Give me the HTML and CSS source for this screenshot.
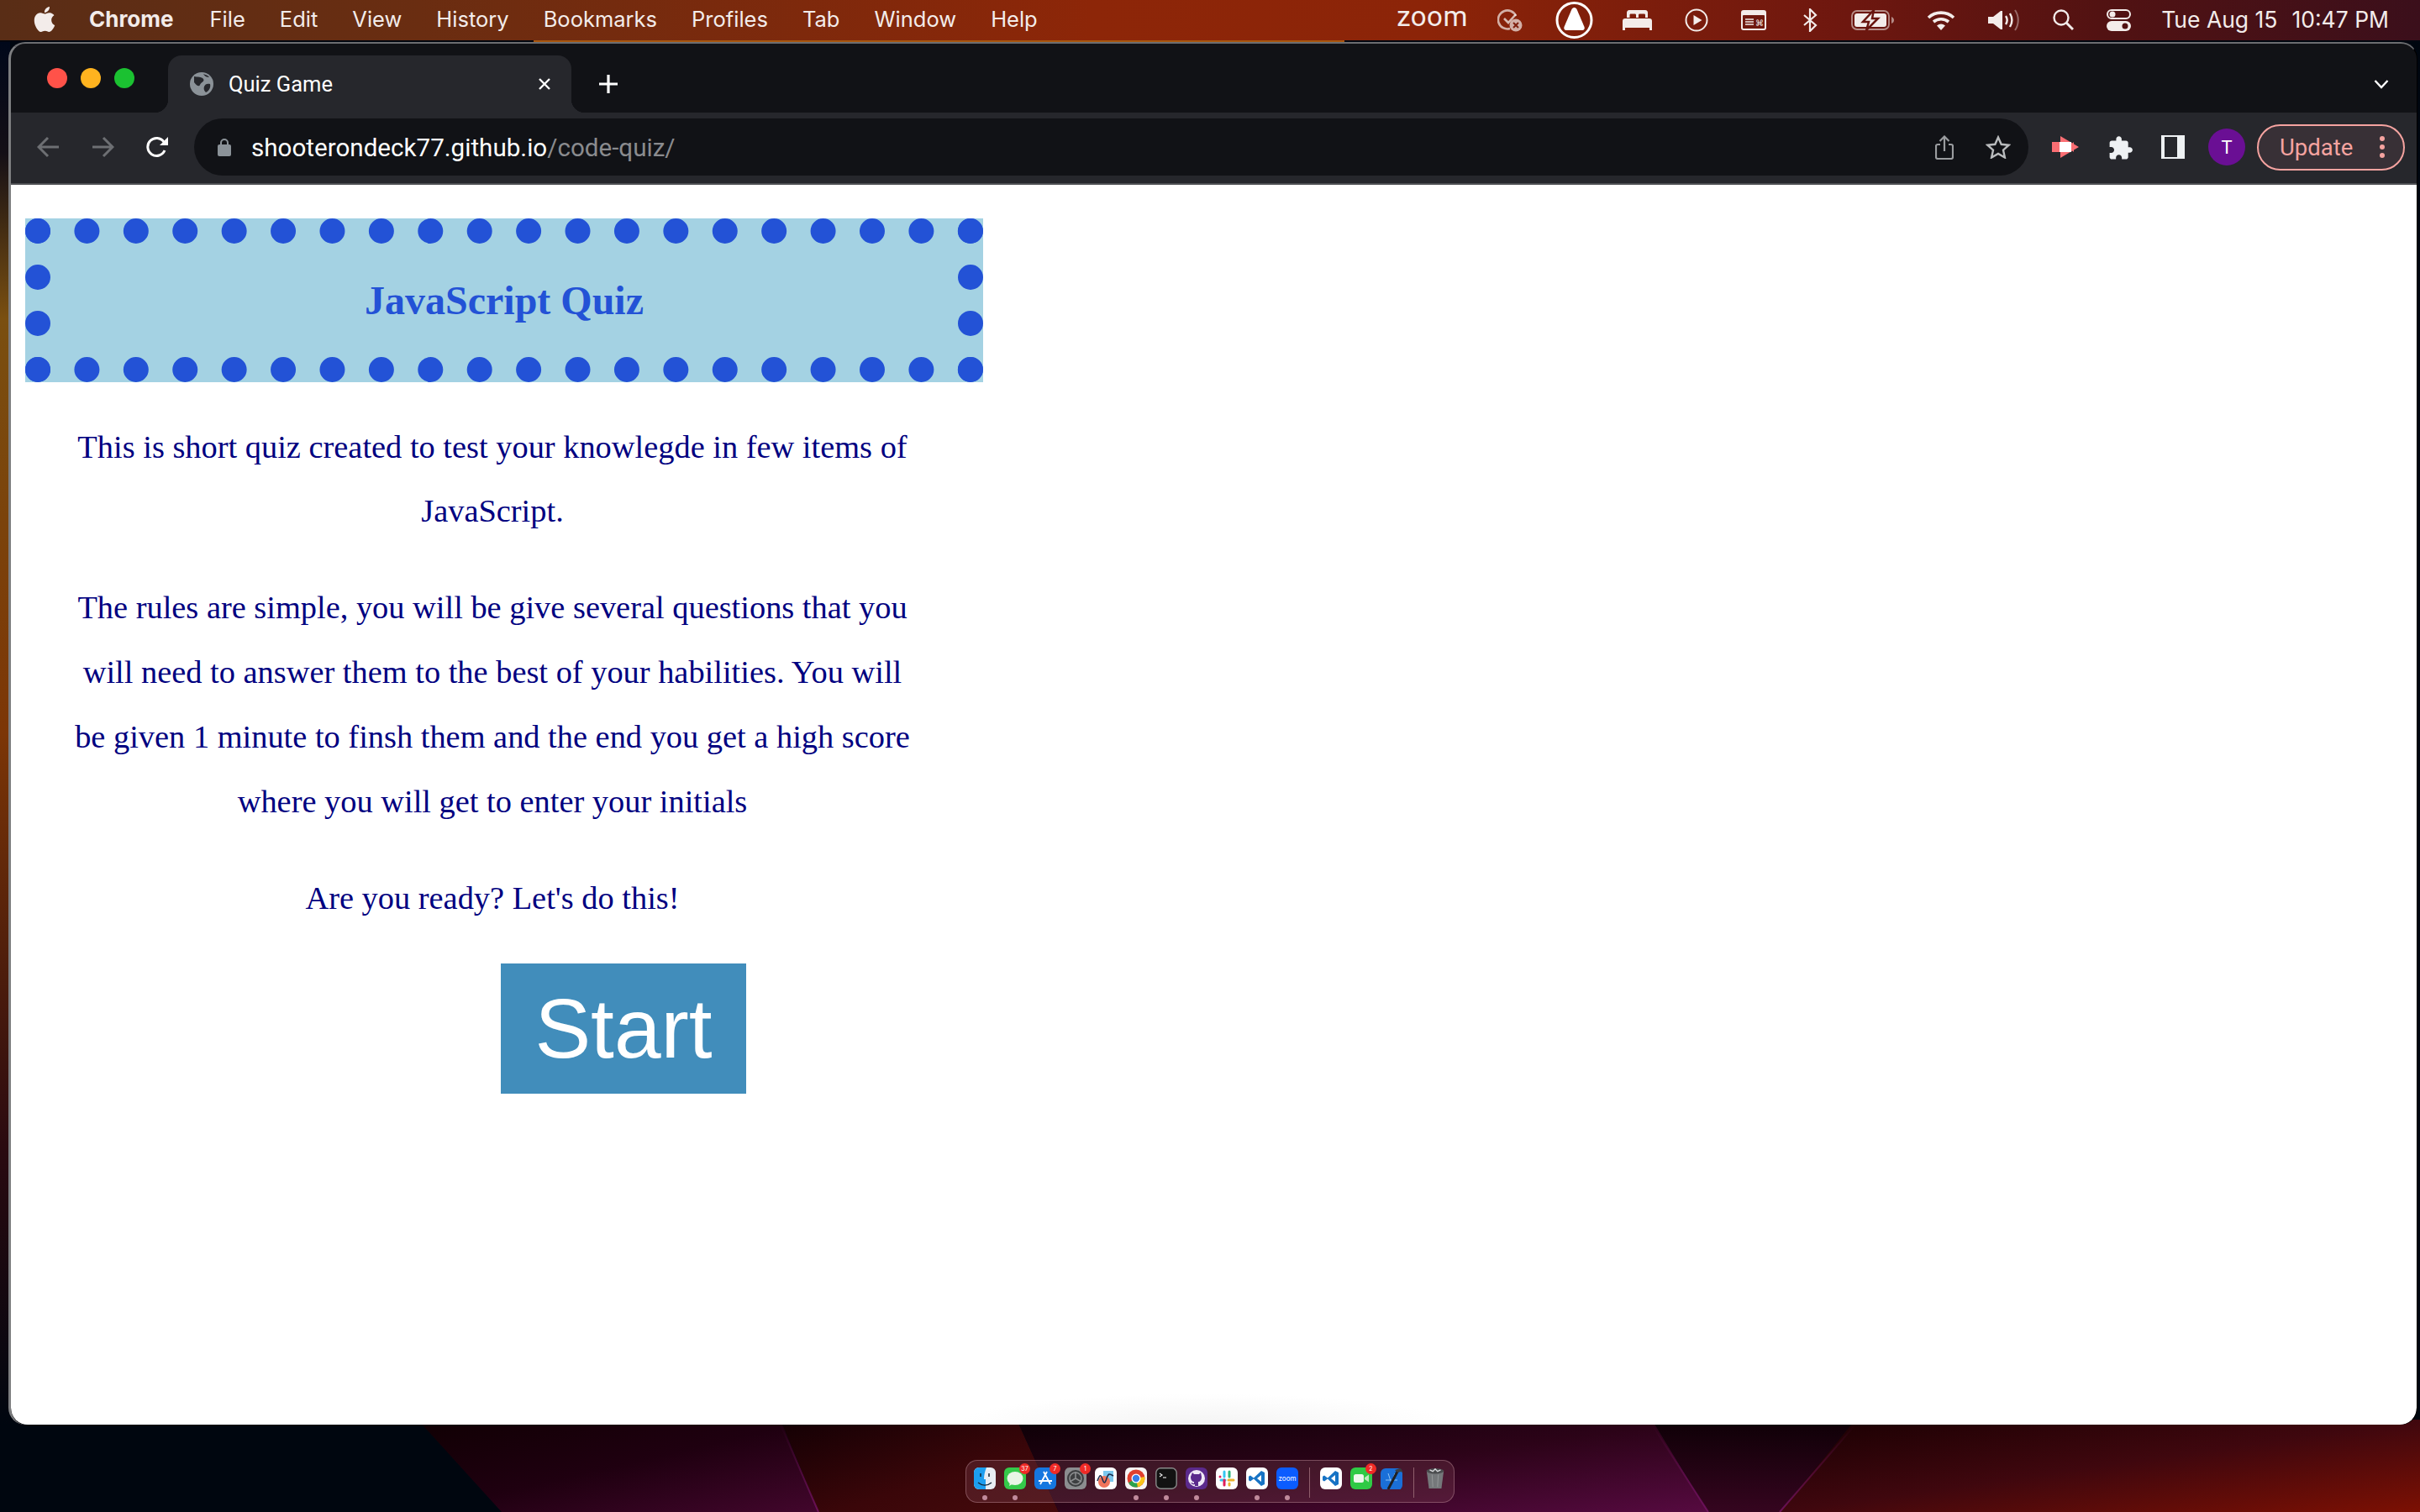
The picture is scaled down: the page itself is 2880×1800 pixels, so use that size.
FILE: index.html
```html
<!DOCTYPE html>
<html lang="en">
<head>
<meta charset="utf-8">
<title>Quiz Game</title>
<link rel="stylesheet" href="styles.css">
</head>
<body>
<div class="desktop">
  <svg class="wallpaper" viewBox="0 0 2880 1800" aria-hidden="true">
    <defs>
      <linearGradient id="ws" x1="0" y1="0" x2="0" y2="1"><stop offset="0" stop-color="#00081a"/><stop offset=".08" stop-color="#140f16"/><stop offset=".2" stop-color="#7a4f10"/><stop offset=".5" stop-color="#7c3606"/><stop offset=".8" stop-color="#2a0a10"/><stop offset="1" stop-color="#00060f"/></linearGradient>
      <linearGradient id="wa" x1="0" y1="0" x2="1" y2="1"><stop offset="0" stop-color="#100003"/><stop offset=".5" stop-color="#1f0010"/><stop offset="1" stop-color="#42062c"/></linearGradient>
      <linearGradient id="wb" x1="0" y1="0" x2="1" y2="1"><stop offset="0" stop-color="#130004"/><stop offset=".6" stop-color="#3a0609"/><stop offset="1" stop-color="#450a0c"/></linearGradient>
      <linearGradient id="wc" x1="0" y1="0" x2="1" y2="1"><stop offset="0" stop-color="#0d0006"/><stop offset=".5" stop-color="#2c0318"/><stop offset="1" stop-color="#560a40"/></linearGradient>
      <linearGradient id="wd" x1="0" y1="0" x2="0" y2="1"><stop offset="0" stop-color="#0e0006"/><stop offset="1" stop-color="#35051f"/></linearGradient>
      <linearGradient id="we" x1="0" y1="0" x2="1" y2="1"><stop offset="0" stop-color="#190002"/><stop offset=".5" stop-color="#3f070e"/><stop offset="1" stop-color="#7c1003"/></linearGradient>
      <linearGradient id="wl" gradientUnits="userSpaceOnUse" x1="0" y1="1696" x2="0" y2="1800"><stop offset="0" stop-color="#6a1058" stop-opacity="0"/><stop offset="1" stop-color="#7a1468" stop-opacity=".8"/></linearGradient>
    </defs>
    <rect width="2880" height="1800" fill="#00060f"/>
    <rect x="0" y="50" width="12" height="1646" fill="url(#ws)"/>
    <rect x="635" y="48" width="965" height="2" fill="#a8560e"/>
    <path d="M497 1690L597 1800H974L929 1690Z" fill="url(#wa)"/>
    <path d="M929 1690L974 1800H1260L1210 1690Z" fill="url(#wb)"/>
    <path d="M1210 1690L1260 1800H2033L1966 1690Z" fill="url(#wc)"/>
    <path d="M1966 1690L2033 1800H2118L2208 1690Z" fill="url(#wd)"/>
    <path d="M2208 1690L2118 1800H2880V1690Z" fill="url(#we)"/>
    <path d="M929 1696L974 1800M1966 1696L2033 1800M2208 1696L2118 1800" stroke="url(#wl)" stroke-width="2" fill="none"/>
  </svg>

  <header class="menubar">
    <nav class="menu-left">
      <svg class="apple" viewBox="0 0 24 24"><path fill="currentColor" d="M12.152 6.896c-.948 0-2.415-1.078-3.96-1.04-2.04.027-3.91 1.183-4.961 3.014-2.117 3.675-.546 9.103 1.519 12.09 1.013 1.454 2.208 3.09 3.792 3.039 1.52-.065 2.09-.987 3.935-.987 1.831 0 2.35.987 3.96.948 1.637-.026 2.676-1.48 3.676-2.948 1.156-1.688 1.636-3.325 1.662-3.415-.039-.013-3.182-1.221-3.22-4.857-.026-3.04 2.48-4.494 2.597-4.559-1.429-2.09-3.623-2.324-4.39-2.376-2-.156-3.675 1.09-4.61 1.09zM15.53 3.83c.843-1.012 1.4-2.427 1.245-3.83-1.207.052-2.662.805-3.532 1.818-.78.896-1.454 2.338-1.273 3.714 1.338.104 2.715-.688 3.559-1.701"/></svg>
      <span class="app-name">Chrome</span>
      <span>File</span><span>Edit</span><span>View</span><span>History</span><span>Bookmarks</span><span>Profiles</span><span>Tab</span><span>Window</span><span>Help</span>
    </nav>
    <div class="menu-right">
      <span class="zoom-mark">zoom</span>
      <svg class="st w30" viewBox="0 0 30 28"><path d="M22 9A11 11 0 1 0 15 24" fill="none" stroke="currentColor" stroke-width="2.6" opacity=".7"/><path d="M8 12l5 5 9-10" fill="none" stroke="currentColor" stroke-width="2.6" opacity=".75"/><circle cx="22" cy="20" r="7.5" fill="currentColor" opacity=".7"/><path d="M19 17l6 6M25 17l-6 6" stroke="#7e1f0d" stroke-width="2"/></svg>
      <svg class="st w45" viewBox="0 0 45 44"><circle cx="22.5" cy="22" r="20.5" fill="none" stroke="#fff" stroke-width="3"/><path d="M22.5 7c1.500 0 2.500 1 3 2l9 21c.8 2-.3 4-2.500 4H13c-2.200 0-3.300-2-2.500-4l9-21c.5-1 1.500-2 3-2z" fill="#fff"/></svg>
      <svg class="st w35" viewBox="0 0 35 24"><path fill="currentColor" d="M5 9V3c0-1.500 1-3 3-3h19c2 0 3 1.500 3 3v6h-3V6c0-1-.5-1.500-1.500-1.500h-5c-1 0-1.500.5-1.500 1.500v3h-3V6c0-1-.5-1.500-1.500-1.500h-5C9 4.500 8.500 5 8.500 6v3zM3 10h29c2 0 3 1 3 3v11h-3v-3H3v3H0V13c0-2 1-3 3-3z"/></svg>
      <svg class="st w28" viewBox="0 0 28 28"><circle cx="14" cy="14" r="12.500" fill="none" stroke="currentColor" stroke-width="2"/><path d="M10.500 8l10 6-10 6z" fill="currentColor"/></svg>
      <svg class="st w30" viewBox="0 0 30 24"><rect width="30" height="24" rx="3" fill="currentColor"/><rect x="2" y="6" width="26" height="16" rx="1" fill="#6f190f"/><path d="M5 11h10M5 14h10M5 17h10" stroke="currentColor" stroke-width="1.500"/><text x="17" y="19" class="cmd">⌘</text></svg>
      <svg class="st w20 bt" viewBox="0 0 20 28"><path d="M3 8l14 12-7 7V1l7 7L3 20" fill="none" stroke="currentColor" stroke-width="2.200"/></svg>
      <svg class="st w51" viewBox="0 0 51 24"><rect x="1" y="1" width="44" height="22" rx="6" fill="none" stroke="currentColor" opacity=".55" stroke-width="1.800"/><path d="M48 8c2 1 3 2 3 4s-1 3-3 4z" fill="currentColor" opacity=".55"/><rect x="4" y="4" width="38" height="16" rx="3" fill="currentColor"/><path d="M27 0L14 14h7l-3 10 14-14h-7z" fill="currentColor" stroke="#68150f" stroke-width="2.500"/></svg>
      <svg class="st w34" viewBox="0 0 34 24"><path d="M2 9a22 22 0 0 1 30 0M8 14a14 14 0 0 1 18 0" fill="none" stroke="currentColor" stroke-width="3.600"/><path d="M12 18.500a8 8 0 0 1 10 0L17 24z" fill="currentColor"/></svg>
      <svg class="st w38" viewBox="0 0 38 28"><path fill="currentColor" d="M0 10h6L15 3h2v22h-2L6 18H0z"/><path d="M21 9c2 3 2 7 0 10M26 6c3 5 3 11 0 16" fill="none" stroke="currentColor" stroke-width="2.400"/><path d="M32 2c5 7 5 17 0 24" fill="none" stroke="currentColor" stroke-width="2" opacity=".4"/></svg>
      <svg class="st w25" viewBox="0 0 25 25"><circle cx="10" cy="10" r="8.500" fill="none" stroke="currentColor" stroke-width="2.400"/><path d="M16 16l8 8" stroke="currentColor" stroke-width="3"/></svg>
      <svg class="st w29" viewBox="0 0 29 26"><rect x="1" y="1" width="27" height="10" rx="5" fill="none" stroke="currentColor" stroke-width="2"/><circle cx="7" cy="6" r="3.500" fill="currentColor"/><rect y="14" width="29" height="12" rx="6" fill="currentColor"/><circle cx="22" cy="20" r="3.500" fill="#521212"/></svg>
      <div class="clock"><span>Tue Aug 15</span><span>10:47 PM</span></div>
    </div>
  </header>

  <div class="window">
    <div class="tabstrip">
      <div class="lights"><i class="light red"></i><i class="light yellow"></i><i class="light green"></i></div>
      <div class="tab">
        <svg class="favicon" viewBox="0 0 28 28"><circle cx="14" cy="14" r="14" fill="#8b9298"/><path d="M5 5c4 1 9 0 11 3s-3 4-4 7-5 0-7-3zM24 14c-3-1-6 0-7 3s0 5 2 7c4-2 6-6 5-10zM16 2c2 1 5 1 7 4-3 0-5-1-7-4z" fill="#26272c"/></svg>
        <span class="tab-title">Quiz Game</span>
        <svg class="tab-x" viewBox="0 0 16 16"><path d="M2 2l12 12M14 2L2 14" stroke="#fff" stroke-width="2.400"/></svg>
      </div>
      <svg class="newtab" viewBox="0 0 24 24"><path d="M12 1v22M1 12h22" stroke="#fff" stroke-width="3.200"/></svg>
      <svg class="chev" viewBox="0 0 18 12"><path d="M1.500 2L9 10l7.500-8" fill="none" stroke="#fff" stroke-width="2.400"/></svg>
    </div>
    <div class="toolbar">
      <div class="nav-group">
        <svg class="nav-ico" viewBox="0 0 27 26"><path d="M26 13H3M13 2L2 13l11 11" fill="none" stroke="#6d6f73" stroke-width="3"/></svg>
        <svg class="nav-ico" viewBox="0 0 27 26"><path d="M1 13h23M14 2l11 11-11 11" fill="none" stroke="#6d6f73" stroke-width="3"/></svg>
        <svg class="nav-ico" viewBox="0 0 27 26"><path d="M22 17a10.500 10.500 0 1 1-1-10" fill="none" stroke="#fff" stroke-width="3"/><path d="M26 1v10H16z" fill="#fff"/></svg>
      </div>
      <div class="omnibox">
        <svg class="lock" viewBox="0 0 16 22"><path d="M4 9V6a4 4 0 0 1 8 0v3" fill="none" stroke="#8b9298" stroke-width="2"/><rect y="8" width="16" height="14" rx="2" fill="#8b9298"/></svg>
        <span class="url">shooterondeck77.github.io<span class="url-path">/code-quiz/</span></span>
        <svg class="share" viewBox="0 0 22 29"><path d="M6 11H3a2 2 0 0 0-2 2v13a2 2 0 0 0 2 2h16a2 2 0 0 0 2-2V13a2 2 0 0 0-2-2h-3M11 19V2M5.500 7L11 1.500 16.500 7" fill="none" stroke="#9a9c9f" stroke-width="2.200"/></svg>
        <svg class="star" viewBox="0 0 30 28"><path d="M15 2.500l3.700 8.300 9 .9-6.700 6 1.900 8.800L15 22l-7.900 4.500L9 17.700l-6.700-6 9-.9z" fill="none" stroke="#b9bbbd" stroke-width="2.400"/></svg>
      </div>
      <div class="ext-group">
        <svg class="ext-rec" viewBox="0 0 38 26"><path d="M10 0l22 13-22 13v-7H0V7h10z" fill="#fa6e73"/><rect x="9" y="7" width="14" height="12" fill="#fff"/><path d="M23 10l3-3v12l-3-3z" fill="#fa6e73"/></svg>
        <svg class="ext-puzzle" viewBox="0 0 36 29"><path transform="scale(1.300)" fill="#eef1f3" d="M20.500 11H19V7c0-1.100-.9-2-2-2h-4V3.500C13 2.120 11.880 1 10.500 1S8 2.120 8 3.500V5H4c-1.100 0-1.990.9-1.990 2v3.800H3.500c1.490 0 2.700 1.210 2.700 2.700s-1.210 2.700-2.700 2.700H2V20c0 1.100.9 2 2 2h3.800v-1.500c0-1.490 1.210-2.700 2.700-2.700 1.490 0 2.700 1.210 2.700 2.700V22H17c1.100 0 2-.9 2-2v-4h1.500c1.380 0 2.500-1.120 2.500-2.500S21.880 11 20.500 11z"/></svg>
        <span class="panel-ico"></span>
        <span class="avatar">T</span>
        <div class="update"><span>Update</span><svg class="update-dots" viewBox="0 0 6 26"><circle cx="3" cy="3" r="3"/><circle cx="3" cy="13" r="3"/><circle cx="3" cy="23" r="3"/></svg></div>
      </div>
    </div>
    <main class="page">
      <h1 class="banner">JavaScript Quiz</h1>
      <section class="intro">
        <p>This is short quiz created to test your knowlegde in few items of JavaScript.</p>
        <p>The rules are simple, you will be give several questions that you will need to answer them to the best of your habilities. You will be given 1 minute to finsh them and the end you get a high score where you will get to enter your initials</p>
        <p>Are you ready? Let's do this!</p>
      </section>
      <button class="start" type="button">Start</button>
      <div class="dock-glow"></div>
    </main>
  </div>

  <footer class="dock">
    <div class="dock-item"><svg class="di" viewBox="0 0 26 26"><rect width="26" height="26" rx="6" fill="#e8edf3"/><path d="M6 0h9c-2 5-3 9-3 14h2v12H6a6 6 0 0 1-6-6V6a6 6 0 0 1 6-6z" fill="#1c9ef0"/><path d="M8 7v4M18 7v4" stroke="#123" stroke-width="1.500"/><path d="M5 18c5 4 11 4 16 0" fill="none" stroke="#123" stroke-width="1.300"/></svg><i class="dot"></i></div>
    <div class="dock-item"><svg class="di" viewBox="0 0 26 26"><rect width="26" height="26" rx="6" fill="#35c94a"/><ellipse cx="13" cy="13" rx="9.500" ry="8" fill="#e9f5e6"/><path d="M7 18l-1 4 5-3z" fill="#e9f5e6"/></svg><b class="badge">37</b><i class="dot"></i></div>
    <div class="dock-item"><svg class="di" viewBox="0 0 26 26"><rect width="26" height="26" rx="6" fill="#1577e0"/><path d="M15 5L7 20M11 5l8 15M5 16h16" stroke="#fff" stroke-width="1.800" fill="none"/></svg><b class="badge">7</b><i class="dot off"></i></div>
    <div class="dock-item"><svg class="di" viewBox="0 0 26 26"><rect width="26" height="26" rx="6" fill="#8b8d8f"/><circle cx="13" cy="13" r="10" fill="#3d3f41"/><circle cx="13" cy="13" r="7" fill="none" stroke="#8b8d8f" stroke-width="1.600"/><path d="M13 13V5M13 13l7 4M13 13l-7 4" stroke="#8b8d8f" stroke-width="1.600"/></svg><b class="badge">1</b><i class="dot off"></i></div>
    <div class="dock-item"><svg class="di" viewBox="0 0 26 26"><rect width="26" height="26" rx="6" fill="#fff"/><rect x="10" y="4" width="12" height="13" fill="#7cc8ee"/><circle cx="11" cy="17" r="7" fill="#f0745a"/><path d="M3 16c3-8 4-8 6-2s3 5 5-1 3-6 8-3" fill="none" stroke="#1d3050" stroke-width="1.600"/></svg><i class="dot off"></i></div>
    <div class="dock-item"><svg class="di" viewBox="0 0 26 26"><rect width="26" height="26" rx="6" fill="#f6f6f6"/><circle cx="13" cy="13" r="10.500" fill="#e0402f"/><path d="M13 13L4 18.200A10.500 10.500 0 0 0 15 23.300z" fill="#2ba24c"/><path d="M13 13l10.300-2a10.500 10.500 0 0 1-8.300 12.300z" fill="#f8c51c"/><circle cx="13" cy="13" r="5.500" fill="#fff"/><circle cx="13" cy="13" r="4.200" fill="#3a7ee8"/></svg><i class="dot"></i></div>
    <div class="dock-item"><svg class="di" viewBox="0 0 26 26"><rect x=".8" y=".8" width="24.400" height="24.400" rx="5.500" fill="#121212" stroke="#8a8a8a" stroke-width="1.400"/><path d="M5 7l3 2-3 2" fill="none" stroke="#eee" stroke-width="1.100"/><path d="M9 12h4" stroke="#eee" stroke-width="1.100"/></svg><i class="dot"></i></div>
    <div class="dock-item"><svg class="di" viewBox="0 0 26 26"><rect width="26" height="26" rx="6" fill="#5b2a8c"/><circle cx="13" cy="13" r="10" fill="#f0e9f6"/><path d="M8 6l2 2h6l2-2 1 5c0 4-2 6-4 6v5h-4v-2c-3 1-4-1-5-2 2 0 3 1 4 1v-2c-2 0-4-2-4-6z" fill="#5b2a8c"/></svg><i class="dot"></i></div>
    <div class="dock-item"><svg class="di" viewBox="0 0 26 26"><rect width="26" height="26" rx="6" fill="#fff"/><path d="M10 5v6M6 15h5" stroke="#36c5f0" stroke-width="3" stroke-linecap="round"/><path d="M16 5v6" stroke="#2eb67d" stroke-width="3" stroke-linecap="round"/><path d="M15 15h6M16 19v2" stroke="#ecb22e" stroke-width="3" stroke-linecap="round"/><path d="M5 11h0M10 15v6" stroke="#e01e5a" stroke-width="3" stroke-linecap="round"/></svg><i class="dot off"></i></div>
    <div class="dock-item"><svg class="di" viewBox="0 0 26 26"><rect width="26" height="26" rx="6" fill="#fff"/><path d="M18 4l4 2v14l-4 2-9-8.500-4 3-2-1.200V10.700l2-1.200 4 3zM18 9l-5 4 5 4z" fill="#1673c5"/></svg><i class="dot"></i></div>
    <div class="dock-item"><span class="di zoomapp">zoom</span><i class="dot"></i></div>
    <i class="dock-sep"></i>
    <div class="dock-item"><svg class="di" viewBox="0 0 26 26"><rect width="26" height="26" rx="6" fill="#fff"/><path d="M18 4l4 2v14l-4 2-9-8.500-4 3-2-1.200V10.700l2-1.200 4 3zM18 9l-5 4 5 4z" fill="#1673c5"/></svg><i class="dot off"></i></div>
    <div class="dock-item"><svg class="di" viewBox="0 0 26 26"><rect width="26" height="26" rx="6" fill="#2fca45"/><rect x="4" y="8" width="12" height="10" rx="2.500" fill="#eef7ec"/><path d="M17 12l5-3.500v9L17 14z" fill="#bfe8bd"/></svg><b class="badge">2</b><i class="dot off"></i></div>
    <div class="dock-item"><svg class="di" viewBox="0 0 26 26"><rect width="26" height="26" y="1" rx="6" fill="#1a6fd8"/><path d="M9 7l4 12M17 7l-4 12M6 15h14" stroke="#8cc4f5" stroke-width="1"/><path d="M9 26L21 3" stroke="#1e2024" stroke-width="3"/><path d="M17 3l7-2 3 5-3-1-4 1z" fill="#3a3d42"/></svg><i class="dot off"></i></div>
    <i class="dock-sep"></i>
    <div class="dock-item"><svg class="di" viewBox="0 0 26 28"><path d="M2 4h22l-3 23H5z" fill="#75787a"/><ellipse cx="13" cy="4.500" rx="11" ry="3.500" fill="#4a4c4e"/><path d="M6 3l4 2 3-3 3 3 4-2" stroke="#d8dadc" stroke-width="1.500" fill="none"/><path d="M9 9l1 16M17 9l-1 16" stroke="#96999b" stroke-width="1"/></svg><i class="dot off"></i></div>
  </footer>
</div>
</body>
</html>
```
FILE: styles.css
```css
* { box-sizing: border-box; }
html, body { margin: 0; padding: 0; background: #00060f; }
.desktop { position: relative; width: 2880px; height: 1800px; overflow: hidden; display: flex; flex-direction: column; }
.wallpaper { position: absolute; inset: 0; width: 2880px; height: 1800px; }

/* macOS menu bar */
.menubar { position: relative; height: 48px; flex: none; padding-bottom: 3px; display: flex; justify-content: space-between; align-items: center; color: #f3ecea; font: 400 25.500px Inter, "Liberation Sans", sans-serif; background: linear-gradient(90deg, #592d16 0, #6a2d11 500px, #8d2608 1300px, #8c2408 1700px, #6e170f 2200px, #521212 2500px, #3b0f1b 2880px); }
.menu-left { display: flex; align-items: center; gap: 41px; padding-left: 40px; white-space: nowrap; }
.apple { width: 30px; height: 32px; margin: 1px 0 0 -2px; }
.app-name { font-weight: 700; margin-left: -3px; margin-right: 2px; font-size: 26px; }
.menu-right { display: flex; align-items: center; gap: 39px; padding-right: 37px; }
.zoom-mark { width: 81px; font: 400 33px Roboto, sans-serif; letter-spacing: .5px; text-align: center; margin-top: -6px; }
.st { flex: none; height: 28px; color: #f3ecea; position: relative; top: 1px; }
.w20 { width: 20px; } .w25 { width: 25px; height: 25px; } .w28 { width: 28px; } .w29 { width: 29px; height: 26px; } .w30 { width: 30px; } .w34 { width: 34px; height: 24px; } .w35 { width: 35px; height: 24px; margin-left: -4px; } .w38 { width: 38px; } .w45 { width: 45px; height: 44px; } .w51 { width: 51px; height: 24px; }
.bt { margin-left: 3px; }
.cmd { font: 10px "DejaVu Sans", sans-serif; fill: #f3ecea; }
.clock { display: flex; gap: 17px; margin-left: -3px; white-space: nowrap; font-size: 26.500px; }

/* browser window */
.window { position: relative; flex: none; width: 2867px; height: 1646px; margin: 2px 0 0 10px; border-radius: 20px; overflow: hidden; background: #111216; border-top: 2px solid #6c6d70; border-left: 3px solid #7d7e80; border-right: 1px solid #000; display: flex; flex-direction: column; }
.tabstrip { flex: none; height: 82px; display: flex; align-items: flex-start; position: relative; }
.lights { display: flex; gap: 16px; padding: 29px 0 0 43px; width: 187px; }
.light { width: 24px; height: 24px; border-radius: 50%; }
.red { background: #ff5249; } .yellow { background: #ffb31f; } .green { background: #1bc131; }
.tab { position: relative; width: 480px; height: 68px; margin-top: 14px; background: #26272c; border-radius: 16px 16px 0 0; display: flex; align-items: center; padding: 0 24px 0 26px; color: #fff; font: 400 25.500px Roboto, sans-serif; }
.tab::before, .tab::after { content: ""; position: absolute; bottom: 0; width: 16px; height: 16px; }
.tab::before { left: -16px; background: radial-gradient(circle at 0 0, #111216 16px, #26272c 16.500px); }
.tab::after { right: -16px; background: radial-gradient(circle at 100% 0, #111216 16px, #26272c 16.500px); }
.favicon { width: 28px; height: 28px; flex: none; }
.tab-title { flex: 1; margin-left: 18px; white-space: nowrap; }
.tab-x { width: 16px; height: 16px; }
.newtab { width: 24px; height: 24px; margin: 36px 0 0 32px; }
.chev { width: 18px; height: 12px; margin: 42px 0 0 auto; position: absolute; right: 33px; top: 0; }

.toolbar { flex: none; height: 86px; padding: 0 14px 2px 31px; background: #26272c; border-bottom: 2px solid #4e4f53; display: flex; align-items: center; }
.nav-group { display: flex; gap: 38px; flex: none; }
.nav-ico { width: 27px; height: 26px; }
.omnibox { flex: 1; height: 68px; margin-left: 30px; border-radius: 34px; background: #111216; display: flex; align-items: center; padding: 0 21px 0 28px; }
.lock { width: 16px; height: 22px; flex: none; }
.url { flex: 1; margin-left: 24px; padding-top: 1px; color: #fff; font: 400 29.600px Roboto, sans-serif; white-space: nowrap; }
.url-path { color: #8a8b8e; }
.share { width: 22px; height: 29px; flex: none; }
.star { width: 30px; height: 28px; margin-left: 38px; flex: none; }
.ext-group { display: flex; align-items: center; gap: 28px; margin-left: 28px; flex: none; }
.ext-rec { width: 38px; height: 26px; }
.ext-puzzle { width: 36px; height: 29px; }
.panel-ico { width: 28px; height: 28px; background: #26272c; border: solid #eef1f3; border-width: 2px 4px 2px 4px; border-right-width: 9px; }
.avatar { width: 44px; height: 44px; border-radius: 50%; background: #6a0f94; color: #fff; font: 400 22px Roboto, sans-serif; display: flex; align-items: center; justify-content: center; }
.update { width: 176px; height: 55px; margin-left: -14px; border: 2.500px solid #f5a3a0; border-radius: 28px; background: #383036; color: #f5a3a0; font: 400 27.500px Roboto, sans-serif; display: flex; align-items: center; justify-content: space-between; padding: 0 22px 0 25px; }
.update-dots { width: 6px; height: 26px; fill: #f5a3a0; }

/* quiz page */
.page { position: relative; flex: 1; background: #fff; padding: 40px 0 0 17px; border-radius: 0 0 20px 20px; font-family: "Liberation Serif", serif; }
.banner { width: 1140px; height: 195px; margin: 0; border: 30px dotted #2352d6; background: #a4d2e3; color: #2352d6; font-size: 48px; font-weight: 700; display: flex; align-items: center; justify-content: center; }
.intro { width: 1004px; margin: 38.500px 0 0 54px; color: #000080; font-size: 38.400px; line-height: 76.800px; text-align: center; }
.intro p { margin: 0 0 38.400px; }
.start { display: block; width: 292px; height: 155px; margin: 39.500px 0 0 566px; padding: 0; border: 0; background: #418dbb; color: #fff; font: 400 100px "Liberation Sans", sans-serif; }
.dock-glow { position: absolute; left: 1100px; bottom: 0; width: 640px; height: 40px; background: radial-gradient(ellipse at 50% 100%, #f4f4f4 0, #fff 65%); }

/* dock */
.dock { position: relative; align-self: center; flex: none; height: 51px; margin-top: 42px; padding: 8px 9px 0; display: flex; gap: 10px; border: 1.500px solid rgba(205,160,170,.4); border-radius: 14px; background: rgba(130,70,85,.3); }
.dock-item { position: relative; width: 26px; display: flex; flex-direction: column; align-items: center; }
.di { width: 26px; height: 26px; flex: none; }
.dot { width: 6px; height: 6px; margin-top: 7px; border-radius: 50%; background: #c08a9b; }
.dot.off { background: transparent; }
.badge { position: absolute; top: -5px; right: -5px; width: 13px; height: 13px; border-radius: 50%; background: #f02a26; color: #fff; font: 400 7px/13px Inter, sans-serif; text-align: center; }
.dock-sep { width: 1px; height: 36px; margin: 0 2.500px; background: #8f5f6c; }
.zoomapp { display: block; border-radius: 6px; background: #0b5cff; color: #fff; font: 400 8px/26px Inter, sans-serif; text-align: center; }
```
